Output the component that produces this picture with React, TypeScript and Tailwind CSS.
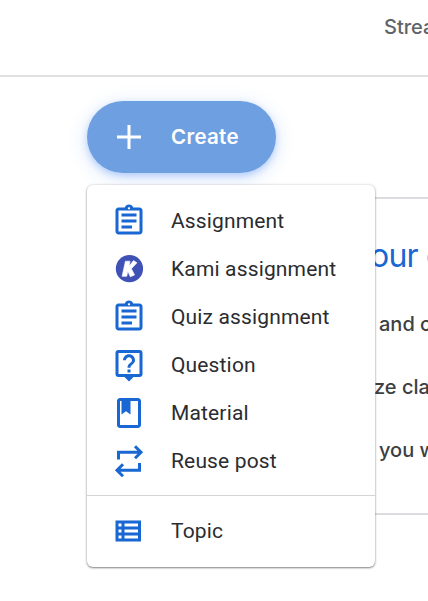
import React from "react";

type IconProps = { children: React.ReactNode };

function Icon({ children }: IconProps) {
  return (
    <svg viewBox="0 0 24 24" className="h-9 w-9 shrink-0 fill-[#1967d2]">
      {children}
    </svg>
  );
}

function AssignmentIcon() {
  return (
    <Icon>
      <path d="M7 15h7v2H7zm0-4h10v2H7zm0-4h10v2H7z" />
      <path d="M19 3h-4.18C14.4 1.84 13.3 1 12 1s-2.4.84-2.82 2H5c-1.1 0-2 .9-2 2v14c0 1.1.9 2 2 2h14c1.1 0 2-.9 2-2V5c0-1.1-.9-2-2-2zm-7-.25c.41 0 .75.34.75.75s-.34.75-.75.75-.75-.34-.75-.75.34-.75.75-.75zM19 19H5V5h14v14z" />
    </Icon>
  );
}

function KamiIcon() {
  return (
    <Icon>
      <circle cx="12.3" cy="11.8" r="9.1" fill="#3f51b5" />
      <path
        d="M9.6 6.8h3.1l-.7 3.3 3-3.7 2.3 1.5-3.7 3.9 2.1 4.2-2.8 1.2-1.7-3.7-.7 3.4H7.4z"
        fill="#fff"
        stroke="#fff"
        strokeWidth="0.4"
        strokeLinejoin="round"
      />
    </Icon>
  );
}

function QuestionIcon() {
  return (
    <Icon>
      <path d="M19 2H5a2 2 0 0 0-2 2v14a2 2 0 0 0 2 2h4l3 3 3-3h4a2 2 0 0 0 2-2V4a2 2 0 0 0-2-2zm0 16H5V4h14v14z" />
      <path d="M11 15h2v2h-2zM12 6.8c1.1 0 2 .9 2 2 0 2-3 1.75-3 5h2c0-2.25 3-2.5 3-5 0-2.21-1.79-4-4-4s-4 1.79-4 4h2c0-1.1.9-2 2-2z" />
    </Icon>
  );
}

function MaterialIcon() {
  return (
    <Icon>
      <path d="M18 2H6c-1.1 0-2 .9-2 2v16c0 1.1.9 2 2 2h12c1.1 0 2-.9 2-2V4c0-1.1-.9-2-2-2zm0 18H6V4h1v9l3-2.25L13 13V4h5v16z" />
    </Icon>
  );
}

function ReuseIcon() {
  return (
    <Icon>
      <path
        d="M5 11V6.2h14.5M16 2.2l4 4-4 4M19 13.3v4.9H4.5M8 14.2l-4 4 4 4"
        fill="none"
        stroke="#1967d2"
        strokeWidth="2"
      />
    </Icon>
  );
}

function TopicIcon() {
  return (
    <Icon>
      <path
        fillRule="evenodd"
        d="M3 5h17v14H3zM5 7v2h2V7zm4 0v2h9V7zm-4 4v2h2v-2zm4 0v2h9v-2zm-4 4v2h2v-2zm4 0v2h9v-2z"
      />
    </Icon>
  );
}

const items = [
  { label: "Assignment", icon: <AssignmentIcon /> },
  { label: "Kami assignment", icon: <KamiIcon /> },
  { label: "Quiz assignment", icon: <AssignmentIcon /> },
  { label: "Question", icon: <QuestionIcon /> },
  { label: "Material", icon: <MaterialIcon /> },
  { label: "Reuse post", icon: <ReuseIcon /> },
];

function MenuItem({ label, icon }: { label: string; icon: React.ReactNode }) {
  return (
    <button className="flex h-12 w-full items-center gap-6 pl-6 text-left text-[21px] tracking-[0.15px] text-[#2b2c2f]">
      {icon}
      <span className="pt-0.5">{label}</span>
    </button>
  );
}

export default function App() {
  return (
    <div className="h-[601px] w-[428px] overflow-hidden bg-white font-['Roboto',sans-serif]">
      <header className="flex h-[77px] justify-end overflow-hidden border-b-2 border-[#e0e0e0] pt-[11px]">
        <div className="w-11 whitespace-nowrap font-['Inter',sans-serif] text-[20px] leading-8 font-medium text-[#5f6368]">
          Strea
        </div>
      </header>

      <main className="pt-6">
        <div className="relative z-10 ml-[87px] w-[189px]">
          <button className="flex h-[72px] w-full items-center gap-6 rounded-full bg-[#6e9fe1] pl-6 text-white shadow-[0_3px_6px_rgba(66,133,244,0.3),0_4px_16px_4px_rgba(66,133,244,0.15)]">
            <svg viewBox="0 0 36 36" className="h-9 w-9">
              <path d="M18 6v24M6 18h24" stroke="#fff" strokeWidth="3" />
            </svg>
            <span className="font-['Inter',sans-serif] text-[20.5px] font-semibold tracking-[0.3px]">Create</span>
          </button>

          <div className="absolute top-[84px] left-0 w-72 rounded-md bg-white py-3 shadow-[0_1px_2px_rgba(60,64,67,0.6),0_0_3px_rgba(60,64,67,0.2)]">
            {items.map((item) => (
              <MenuItem key={item.label} label={item.label} icon={item.icon} />
            ))}
            <hr className="mt-[10px] mb-[11px] border-t border-[#d5d5d5]" />
            <MenuItem label="Topic" icon={<TopicIcon />} />
          </div>
        </div>

        <section className="mt-6 ml-[340px] h-[318px] overflow-hidden border-y-2 border-[#dadce0] pt-[37px] pl-[30px] font-['Inter',sans-serif] text-[20px] leading-8 font-medium whitespace-nowrap text-[#3c4043]">
          <h2 className="text-[32px] leading-10 font-normal tracking-[-0.8px] text-[#1967d2]">our c</h2>
          <p className="mt-[32px] pl-[9px]">and c</p>
          <p className="mt-[31px] pl-[4px]">ze cla</p>
          <p className="mt-[31px] pl-[9px]">you w</p>
        </section>
      </main>
    </div>
  );
}
